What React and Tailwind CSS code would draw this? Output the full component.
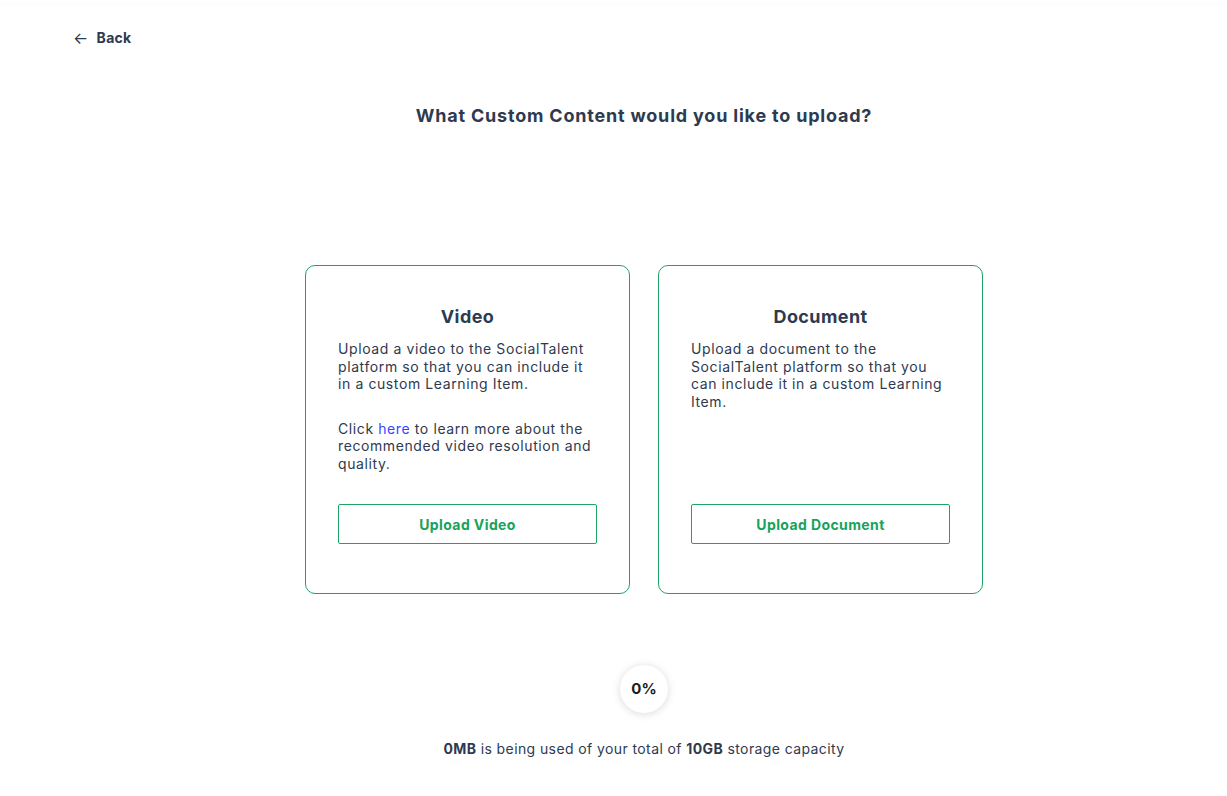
export default function App() {
    return (
        <div className="min-h-[796px] bg-white text-[#2e3a4f] font-['Inter',sans-serif]">
            <div className="h-px shadow-[0_0_10px_rgba(0,0,0,0.12)]"></div>
            <div className="px-[73px] pt-[26px]">
                <button className="flex items-center gap-[8px] text-[14px] font-bold tracking-[0.3px] text-[#2e3a4f]">
                    <span className="text-[16px] font-normal leading-none">←</span>
                    Back
                </button>
            </div>
            <div className="pl-[61px]">
                <h1 className="text-center text-[18px] font-bold mt-[54px] tracking-[0.8px]">What Custom Content would you like to upload?</h1>

                <div className="flex justify-center gap-[28px] mt-[136px]">
                    <div className="w-[325px] h-[329px] border border-[#1ea462] rounded-[10px] px-[32px] pt-[39px] pb-[49px] flex flex-col">
                        <h2 className="text-center text-[18px] font-bold leading-[24px] tracking-[0.4px]">Video</h2>
                        <p className="mt-[11px] text-[14px] leading-[17.5px] tracking-[0.6px]">Upload a video to the SocialTalent platform so that you can include it in a custom Learning Item.</p>
                        <p className="mt-[27px] text-[14px] leading-[17.5px] tracking-[0.6px]">Click <a href="#" className="text-[#3b43ff]">here</a> to learn more about the recommended video resolution and quality.</p>
                        <button className="mt-auto h-[40px] w-full border border-[#1ea462] rounded-[2px] text-[#16a35a] text-[14px] font-bold tracking-[0.4px]">Upload Video</button>
                    </div>
                    <div className="w-[325px] h-[329px] border border-[#1ea462] rounded-[10px] px-[32px] pt-[39px] pb-[49px] flex flex-col">
                        <h2 className="text-center text-[18px] font-bold leading-[24px] tracking-[0.4px]">Document</h2>
                        <p className="mt-[11px] text-[14px] leading-[17.5px] tracking-[0.6px]">Upload a document to the SocialTalent platform so that you can include it in a custom Learning Item.</p>
                        <button className="mt-auto h-[40px] w-full border border-[#1ea462] rounded-[2px] text-[#16a35a] text-[14px] font-bold tracking-[0.4px]">Upload Document</button>
                    </div>
                </div>

                <div className="flex justify-center mt-[71px]">
                    <div className="w-[48px] h-[48px] rounded-full bg-white shadow-[0_1px_8px_rgba(0,0,0,0.15)] flex items-center justify-center text-[15px] font-bold text-[#1c1c1c]">0%</div>
                </div>
                <p className="text-center text-[14px] mt-[25px] tracking-[0.4px]"><b>0MB</b> is being used of your total of <b>10GB</b> storage capacity</p>
            </div>
        </div>
    )
}
